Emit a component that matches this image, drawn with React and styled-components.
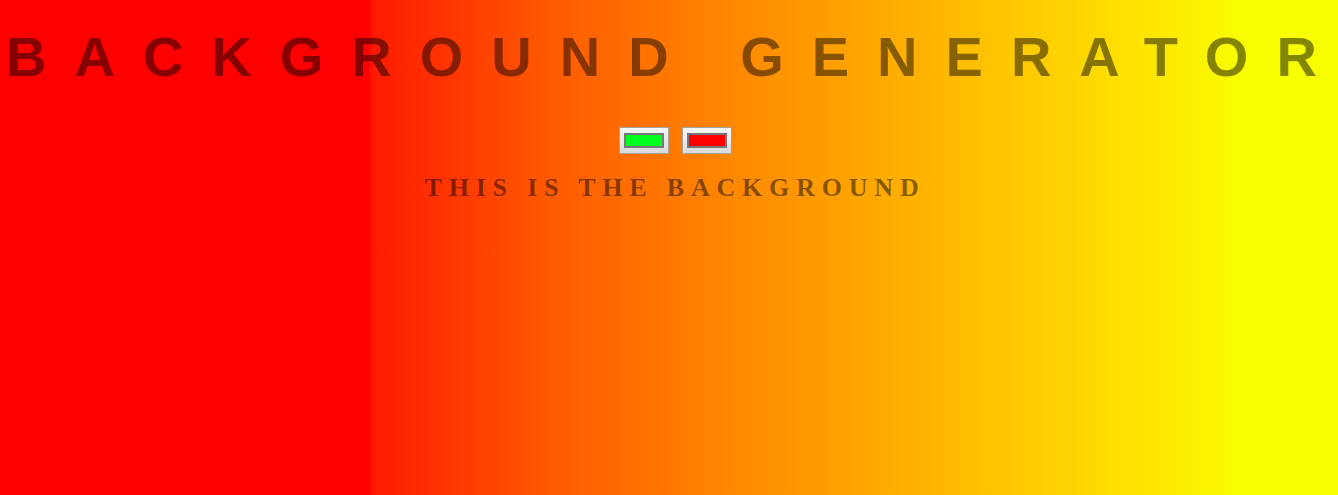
import React, { useState } from "react";
import styled, { createGlobalStyle } from "styled-components";

/* 全局样式 */
const GlobalStyle = createGlobalStyle`
  html, body {
    margin: 0;
    padding: 0;
  }
  body {
    font-family: "Liberation Serif", "Times New Roman", serif;
  }
`;

const Page = styled.div`
  min-height: 100vh;
  padding-top: 24px;
  box-sizing: border-box;
  overflow: hidden;
  background: ${props => props.$bg};
`;

const Title = styled.h1`
  margin: 0 -28px 0 0;
  padding-left: 6px;
  font-family: "Liberation Sans", Arial, sans-serif;
  font-size: 56px;
  font-weight: bold;
  letter-spacing: 28px;
  white-space: nowrap;
  color: rgba(0, 0, 0, 0.47);
`;

const Pickers = styled.div`
  display: flex;
  justify-content: center;
  gap: 13px;
  margin-top: 38px;
  padding-left: 12px;
`;

const ColorInput = styled.input`
  margin: 0;
  width: 50px;
  height: 27px;
  padding: 5px 4px;
  box-sizing: border-box;
  border: 1px solid #a3a3a3;
  border-radius: 0;
  background: linear-gradient(#f7f7f7, #dadada);
  cursor: pointer;

  &::-webkit-color-swatch-wrapper {
    padding: 0;
  }
  &::-webkit-color-swatch {
    border: 2px solid #777;
    border-radius: 0;
  }
`;

const Caption = styled.h3`
  margin: 19px 0 0;
  padding-left: 12px;
  text-align: center;
  font-family: "Liberation Serif", "Times New Roman", serif;
  font-size: 26px;
  font-weight: bold;
  letter-spacing: 6.8px;
  color: rgba(0, 0, 0, 0.47);
`;

const GRADIENT = `linear-gradient(to right,
  #ff0000 0%,
  #ff0000 27.5%,
  #ff1a00 27.9%,
  #ff5a00 41.1%,
  #ff8c00 56.1%,
  #ffba00 71%,
  #ffe600 86%,
  #f8ff00 93.4%,
  #f8ff00 100%)`;

function App() {
  let [left, setLeft] = useState("#00ff1e"),
    [right, setRight] = useState("#ff0000");

  return <Page $bg={GRADIENT}>
    <GlobalStyle />
    <Title>BACKGROUND GENERATOR</Title>
    <Pickers>
      <ColorInput type="color" value={left}
        onChange={e => setLeft(e.target.value)} />
      <ColorInput type="color" value={right}
        onChange={e => setRight(e.target.value)} />
    </Pickers>
    <Caption>THIS IS THE BACKGROUND</Caption>
  </Page>;
}

export default App;
